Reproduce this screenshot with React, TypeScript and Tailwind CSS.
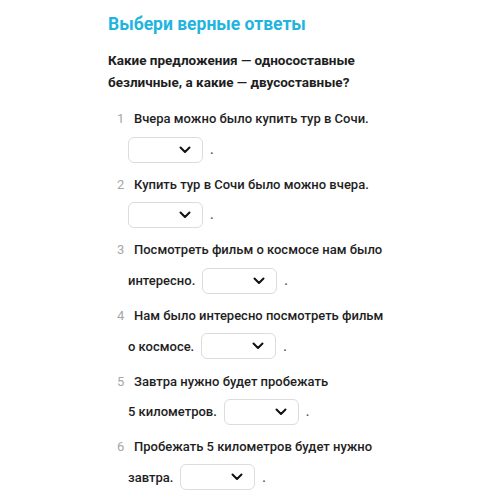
import React from "react";

function Chevron() {
  return (
    <svg width="12" height="8" viewBox="0 0 12 8" fill="none">
      <path d="M1.5 1.5 L6 6 L10.5 1.5" stroke="#111" strokeWidth="2" strokeLinecap="round" strokeLinejoin="round" />
    </svg>
  );
}

function Select() {
  return (
    <span className="inline-flex items-center justify-end w-[75px] h-[26px] rounded-[6px] border border-[#dcdcdc] bg-white pr-[11px]">
      <Chevron />
    </span>
  );
}

type Item = { n: number; line1: string; line2?: string };

const items: Item[] = [
  { n: 1, line1: "Вчера можно было купить тур в Сочи." },
  { n: 2, line1: "Купить тур в Сочи было можно вчера." },
  { n: 3, line1: "Посмотреть фильм о космосе нам было", line2: "интересно." },
  { n: 4, line1: "Нам было интересно посмотреть фильм", line2: "о космосе." },
  { n: 5, line1: "Завтра нужно будет пробежать", line2: "5 километров." },
  { n: 6, line1: "Пробежать 5 километров будет нужно", line2: "завтра." },
];

export default function App() {
  return (
    <div
      className="w-[500px] h-[501px] bg-white overflow-hidden pt-[12px] pl-[108px] text-[#1e1e1e]"
      style={{ fontFamily: '"Roboto", "Noto Sans", sans-serif' }}
    >
      <div className="text-[17.5px] leading-[24px] font-bold text-[#20b4df]">Выбери верные ответы</div>
      <div className="mt-[13px] text-[13.5px] leading-[22px] font-bold text-[#1e1e1e]">
        Какие предложения — односоставные
        <br />
        безличные, а какие — двусоставные?
      </div>
      <div className="mt-[10.5px] pl-[20px]">
        {items.map((it) => (
          <div key={it.n} className="mb-[4.6px]">
            <div className="h-[31px] flex items-center text-[13px] font-medium">
              <span className="w-[17px] -ml-[11px] text-[#a6a6a6] font-normal shrink-0">{it.n}</span>
              <span>{it.line1}</span>
            </div>
            <div className="h-[30px] flex items-center gap-[7px] text-[13px] font-medium">
              {it.line2 && <span>{it.line2}</span>}
              <Select />
              <span className="text-[#555]">.</span>
            </div>
          </div>
        ))}
      </div>
    </div>
  );
}
